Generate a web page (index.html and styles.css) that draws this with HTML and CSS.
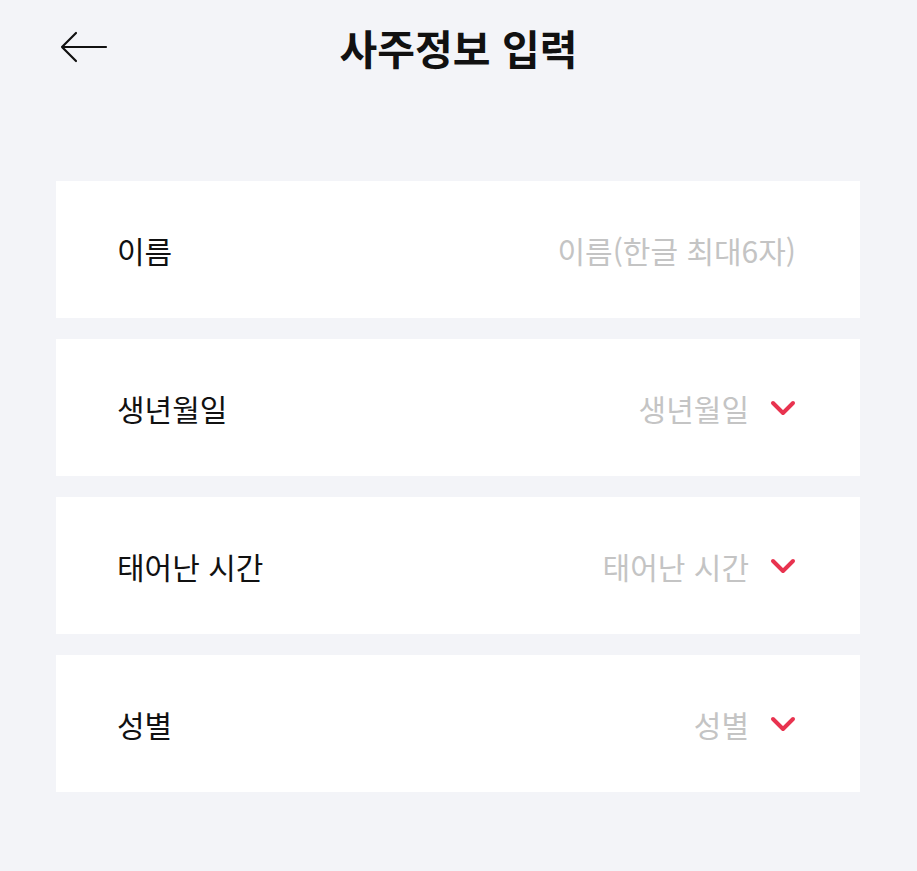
FILE: index.html
```html
<!DOCTYPE html>
<html lang="ko">
<head>
<meta charset="utf-8">
<link rel="stylesheet" href="styles.css">
</head>
<body>
<header class="header">
  <button class="back" aria-label="뒤로">
    <svg width="48" height="40" viewBox="0 0 48 40"><path d="M2 20 H46 M2 20 L16 6 M2 20 L16 34" fill="none" stroke="#111" stroke-width="2.2" stroke-linecap="round" stroke-linejoin="round"/></svg>
  </button>
  <h1 class="title">사주정보 입력</h1>
</header>
<main class="form">
  <div class="row">
    <span class="label">이름</span>
    <span class="value">이름(한글 최대6자)</span>
  </div>
  <div class="row">
    <span class="label">생년월일</span>
    <span class="value">생년월일<svg class="chev" width="26" height="16" viewBox="0 0 26 16"><path d="M3 3 L13 13 L23 3" fill="none" stroke="#e8334f" stroke-width="4" stroke-linecap="round" stroke-linejoin="round"/></svg></span>
  </div>
  <div class="row">
    <span class="label">태어난 시간</span>
    <span class="value">태어난 시간<svg class="chev" width="26" height="16" viewBox="0 0 26 16"><path d="M3 3 L13 13 L23 3" fill="none" stroke="#e8334f" stroke-width="4" stroke-linecap="round" stroke-linejoin="round"/></svg></span>
  </div>
  <div class="row">
    <span class="label">성별</span>
    <span class="value">성별<svg class="chev" width="26" height="16" viewBox="0 0 26 16"><path d="M3 3 L13 13 L23 3" fill="none" stroke="#e8334f" stroke-width="4" stroke-linecap="round" stroke-linejoin="round"/></svg></span>
  </div>
</main>
</body>
</html>
```
FILE: styles.css
```css
html, body {
  margin: 0;
  padding: 0;
  background: #f3f4f8;
  font-family: "Noto Sans CJK KR", "Noto Sans", sans-serif;
}
.header {
  position: relative;
  height: 94px;
  display: flex;
  align-items: center;
  justify-content: center;
}
.back {
  position: absolute;
  left: 60px;
  top: 27px;
  padding: 0;
  border: 0;
  background: none;
  display: flex;
}
.title {
  margin: 0;
  font-size: 41px;
  line-height: 1;
  font-weight: 700;
  color: #111;
}
.form {
  padding: 87px 57px 0 56px;
  display: flex;
  flex-direction: column;
  gap: 21px;
}
.row {
  height: 137px;
  background: #fff;
  display: flex;
  align-items: center;
  justify-content: space-between;
  padding: 0 64px 0 61px;
}
.label {
  font-size: 30px;
  font-weight: 400;
  color: #111;
}
.value {
  font-size: 30px;
  color: #c4c4c4;
  display: flex;
  align-items: center;
  gap: 21px;
}
.chev {
  display: block;
}
```
